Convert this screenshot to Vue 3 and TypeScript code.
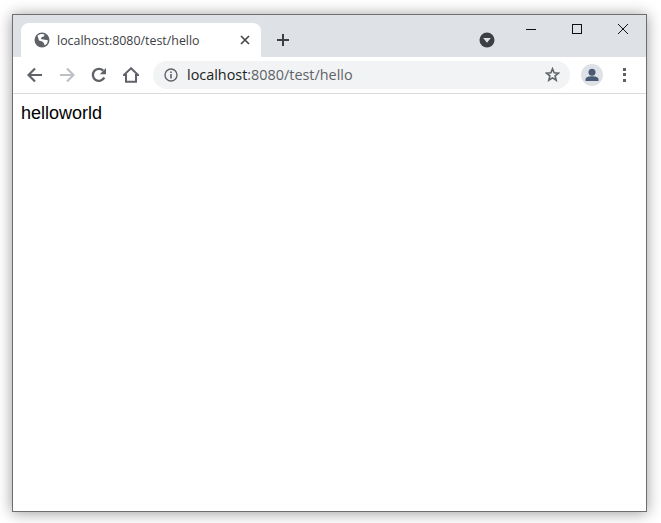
<script setup lang="ts">
const host = 'localhost'
const rest = ':8080/test/hello'
</script>

<template>
  <div class="stage">
    <div class="window">
      <div class="strip">
        <div class="tab">
          <svg class="globe" width="16" height="16" viewBox="0 0 16 16">
            <circle cx="8" cy="8" r="7.5" fill="#5f6368" />
            <path d="M3.500 3.800 C5.500 1.800 8.500 1.800 10.500 2.600 L10 4.500 L7.800 5 L6.800 7 L9.500 7.500 L13.800 8.200 C13.800 10.500 12.500 12.500 10.800 13.400 L9.800 11 L8.300 9.500 L5 8.500Z" fill="#fff" />
          </svg>
          <span class="tab-title">{{ host + rest }}</span>
          <svg class="tab-close" width="10" height="10" viewBox="0 0 10 10">
            <path d="M1 1 L9 9 M9 1 L1 9" stroke="#45484c" stroke-width="1.7" fill="none" />
          </svg>
        </div>
        <svg class="newtab" width="14" height="14" viewBox="0 0 14 14">
          <path d="M7 1 V13 M1 7 H13" stroke="#3c4043" stroke-width="2" fill="none" />
        </svg>
        <svg class="media" width="16" height="16" viewBox="0 0 16 16">
          <circle cx="8" cy="8" r="7.5" fill="#3c4043" />
          <path d="M4.2 6 H11.8 L8 10.8Z" fill="#dee1e6" />
        </svg>
        <div class="controls">
          <svg width="12" height="12" viewBox="0 0 12 12">
            <path d="M1 6.5 H11" stroke="#111" stroke-width="1" fill="none" />
          </svg>
          <svg width="12" height="12" viewBox="0 0 12 12">
            <rect x="1.5" y="1.5" width="9" height="9" stroke="#111" stroke-width="1" fill="none" />
          </svg>
          <svg width="12" height="12" viewBox="0 0 12 12">
            <path d="M1 1 L11 11 M11 1 L1 11" stroke="#111" stroke-width="1" fill="none" />
          </svg>
        </div>
      </div>

      <div class="toolbar">
        <svg class="nav" width="16" height="16" viewBox="0 0 16 16">
          <path d="M15 8 H2 M8 1.5 L1.5 8 L8 14.500" stroke="#5f6368" stroke-width="2.200" fill="none" />
        </svg>
        <svg class="nav" width="16" height="16" viewBox="0 0 16 16">
          <path d="M1 8 H14 M8 1.5 L14.500 8 L8 14.500" stroke="#bdc1c6" stroke-width="2.200" fill="none" />
        </svg>
        <svg class="nav" width="16" height="16" viewBox="0 0 16 16">
          <path d="M13.300 10.500 A6 6 0 1 1 12.200 3.700" stroke="#5f6368" stroke-width="2.400" fill="none" />
          <path d="M15 1 V7.200 H8.800Z" fill="#5f6368" />
        </svg>
        <svg class="nav home" width="16" height="16" viewBox="0 0 16 16">
          <path d="M8 1.300 L15.200 8 H13 V14.800 H3 V8 H0.800Z" stroke="#5f6368" stroke-width="2" fill="none" stroke-linejoin="miter" />
        </svg>
        <div class="omnibox">
          <svg width="14" height="14" viewBox="0 0 14 14">
            <circle cx="7" cy="7" r="6" stroke="#5f6368" stroke-width="1.400" fill="none" />
            <path d="M7 6 V10.500 M7 3.500 V5" stroke="#5f6368" stroke-width="1.600" fill="none" />
          </svg>
          <span class="url"><span class="host">{{ host }}</span>{{ rest }}</span>
          <svg class="star" width="15" height="15" viewBox="0 0 15 15">
            <path d="M7.500 1.800 L9.100 5.800 L13.500 6.100 L10.100 8.900 L11.200 13.200 L7.500 10.900 L3.800 13.200 L4.900 8.900 L1.500 6.100 L5.900 5.800Z" stroke="#5f6368" stroke-width="1.600" fill="none" />
          </svg>
        </div>
        <div class="avatar">
          <svg width="22" height="22" viewBox="0 0 22 22">
            <circle cx="11" cy="8.200" r="3.500" fill="#4a5a75" />
            <path d="M4.500 17 V15.500 C4.500 13 8 12.300 11 12.300 C14 12.300 17.500 13 17.500 15.500 V17Z" fill="#4a5a75" />
          </svg>
        </div>
        <div class="dots"><i></i><i></i><i></i></div>
      </div>

      <div class="page">helloworld</div>
    </div>
  </div>
</template>

<style scoped>
.stage {
  box-sizing: border-box;
  width: 661px;
  height: 523px;
  padding: 14px 14px 11px 12px;
  overflow: hidden;
}
.window {
  box-sizing: border-box;
  width: 635px;
  height: 498px;
  border: 1px solid #6e6e6e;
  background: #fff;
  box-shadow: 0 1px 14px rgba(0, 0, 0, 0.4);
  display: flex;
  flex-direction: column;
  font-family: "Open Sans", "Liberation Sans", sans-serif;
}
.strip {
  height: 42px;
  flex: none;
  background: #dee1e6;
  display: flex;
  align-items: flex-end;
  padding-left: 8px;
}
.tab {
  width: 240px;
  height: 34px;
  box-sizing: border-box;
  background: #fff;
  border-radius: 8px 8px 0 0;
  display: flex;
  align-items: center;
  padding: 0 11px 0 13px;
}
.tab-title {
  margin-left: 7px;
  font-size: 12.4px;
  color: #3c4043;
  white-space: nowrap;
  flex: 1;
}
.newtab {
  margin: 0 0 10px 15px;
}
.media {
  margin: 0 0 9px 189px;
}
.controls {
  margin-left: 30px;
  align-self: flex-start;
  display: flex;
  gap: 34px;
  padding-top: 8px;
}
.toolbar {
  height: 37px;
  flex: none;
  box-sizing: border-box;
  border-bottom: 1px solid #d9dadc;
  display: flex;
  align-items: center;
  padding: 0 0 1px 14px;
}
.nav {
  margin-right: 16px;
}
.nav.home {
  margin-right: 14px;
}
.omnibox {
  width: 417px;
  height: 28px;
  box-sizing: border-box;
  border-radius: 14px;
  background: #f1f3f4;
  display: flex;
  align-items: center;
  padding: 0 10px 0 11px;
}
.url {
  margin-left: 9px;
  font-size: 14.4px;
  color: #5f6368;
  white-space: nowrap;
  flex: 1;
}
.host {
  color: #202124;
}
.avatar {
  width: 22px;
  height: 22px;
  margin-left: 11px;
  border-radius: 50%;
  background: #dee1e6;
}
.dots {
  margin-left: 20px;
  display: flex;
  flex-direction: column;
  gap: 2.500px;
}
.dots i {
  display: block;
  width: 3px;
  height: 3px;
  background: #5f6368;
}
.page {
  padding: 9px 8px;
  font-family: "Liberation Sans", Arial, sans-serif;
  font-size: 18px;
  line-height: 21px;
  color: #000;
}
</style>
